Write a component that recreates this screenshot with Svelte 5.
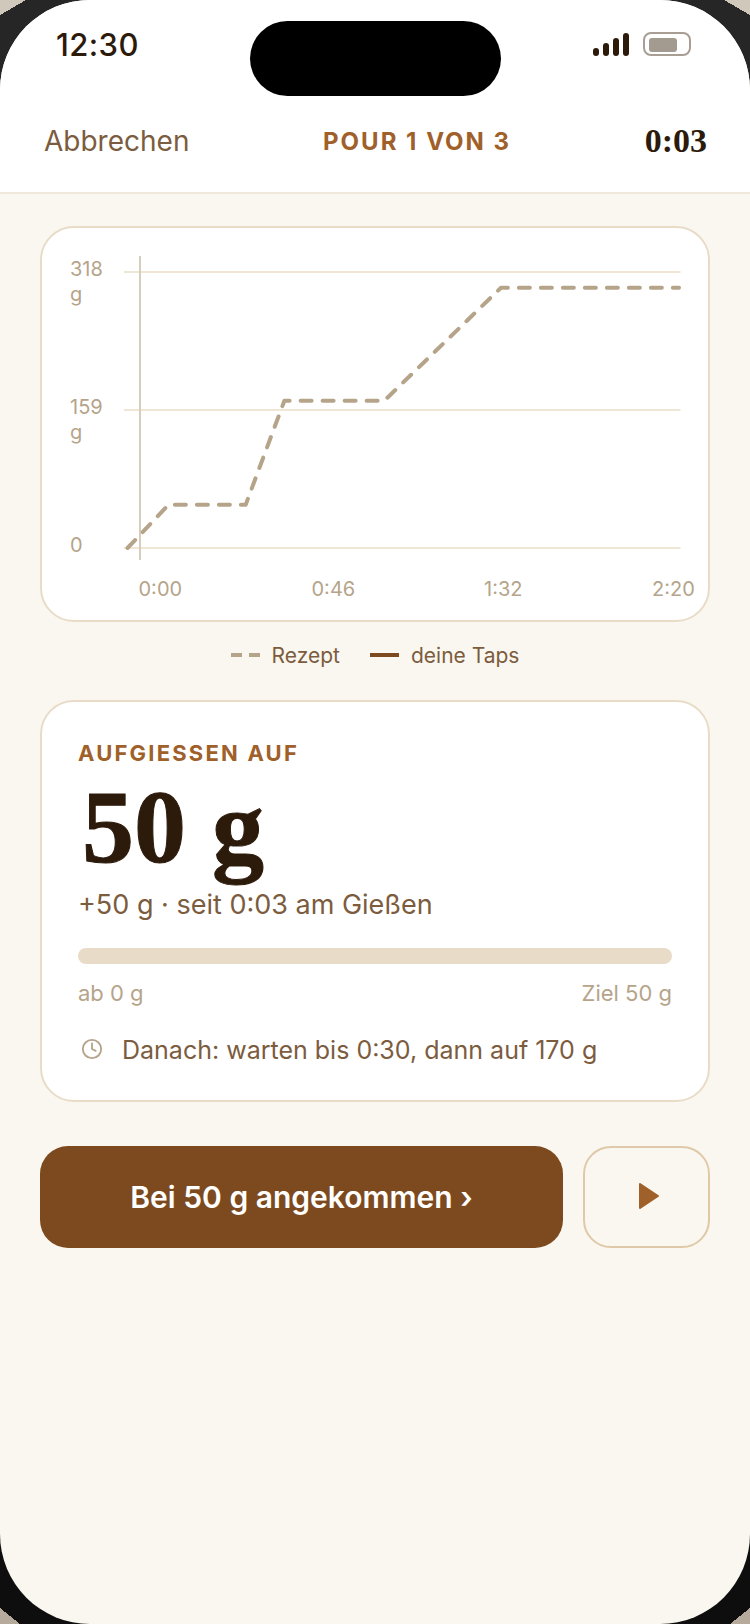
<script>
  const yLabels = [
    { y: 276, lines: ['318', 'g'] },
    { y: 414, lines: ['159', 'g'] },
    { y: 552, lines: ['0'] }
  ]
  const grid = [272, 410, 548]
  const xLabels = [
    { x: 138.5, text: '0:00' },
    { x: 311.5, text: '0:46' },
    { x: 484, text: '1:32' },
    { x: 652, text: '2:20' }
  ]
  const recipe = '127.5,548 168.5,504.7 245.7,504.7 284.4,400.7 384.3,400.7 501,287.7 679,287.7'
  const bars = [8, 13, 18, 23]
</script>

<div class="device">
  <div class="screen">
    <div class="top">
      <div class="status">
        <span class="clock">12:30</span>
        <div class="island"></div>
        <div class="status-icons">
          <div class="signal">
            {#each bars as h}
              <i style="height: {h}px"></i>
            {/each}
          </div>
          <div class="battery"><i></i></div>
        </div>
      </div>
      <header>
        <span class="cancel">Abbrechen</span>
        <span class="step">POUR 1 VON 3</span>
        <span class="elapsed">0:03</span>
      </header>
    </div>

    <main>
      <section class="card chart-card">
        <svg class="chart" viewBox="40 226 670 396" width="670" height="396">
          {#each grid as y}
            <line class="grid" x1="124" x2="680.5" y1={y} y2={y} />
          {/each}
          <line class="axis" x1="140" x2="140" y1="256" y2="560" />
          <polyline class="recipe" points={recipe} />
          {#each yLabels as label}
            <text class="tick" y={label.y}>
              {#each label.lines as line, i}
                <tspan x="70" dy={i ? 25 : 0}>{line}</tspan>
              {/each}
            </text>
          {/each}
          {#each xLabels as label}
            <text class="tick" x={label.x} y="596">{label.text}</text>
          {/each}
        </svg>
      </section>

      <div class="legend">
        <span class="key"><i class="dashes"><b></b><b></b></i>Rezept</span>
        <span class="key"><i class="solid"></i>deine Taps</span>
      </div>

      <section class="card target">
        <div class="eyebrow">AUFGIESSEN AUF</div>
        <div class="amount">50 g</div>
        <div class="since">+50 g · seit 0:03 am Gießen</div>
        <div class="track"></div>
        <div class="range"><span>ab 0 g</span><span>Ziel 50 g</span></div>
        <div class="next">
          <svg viewBox="0 0 24 24" width="22" height="22" fill="none" stroke="currentColor" stroke-width="2" stroke-linecap="round" stroke-linejoin="round">
            <circle cx="12" cy="12" r="10" />
            <polyline points="12 6 12 12 16 14" />
          </svg>
          <span>Danach: warten bis 0:30, dann auf 170 g</span>
        </div>
      </section>

      <div class="actions">
        <button class="primary">Bei 50 g angekommen ›</button>
        <button class="play" aria-label="Abspielen">
          <svg viewBox="0 0 22 28" width="22" height="28">
            <path d="M2 2 L20 14 L2 26 Z" fill="#a0602a" stroke="#a0602a" stroke-width="2" stroke-linejoin="round" />
          </svg>
        </button>
      </div>
    </main>
  </div>
</div>

<style>
  :global(body) {
    margin: 0;
    font-family: Inter, "Liberation Sans", sans-serif;
  }

  .device {
    width: 750px;
    height: 1624px;
    overflow: hidden;
    background:
      linear-gradient(to bottom right, #cfc8bb 50%, transparent 50%) 0 0 / 26px 15px no-repeat,
      linear-gradient(to bottom left, #cfc8bb 50%, transparent 50%) 100% 0 / 26px 15px no-repeat,
      linear-gradient(to top right, #b5aa9b 50%, transparent 50%) 0 100% / 20px 16px no-repeat,
      linear-gradient(to top left, #b5aa9b 50%, transparent 50%) 100% 100% / 20px 16px no-repeat,
      linear-gradient(180deg, #262626 0, #262626 120px, #0e0e0e 1500px);
  }

  .screen {
    width: 750px;
    height: 1624px;
    border-radius: 90px;
    overflow: hidden;
    background: #faf7f0;
    color: #2c1a0a;
  }

  .top {
    background: #fff;
    border-bottom: 2px solid #f0e8dc;
  }

  .status {
    position: relative;
    height: 96px;
    display: flex;
    justify-content: space-between;
    align-items: flex-start;
    padding: 0 59px 0 56px;
    box-sizing: border-box;
  }

  .clock {
    font-size: 31px;
    font-weight: 500;
    letter-spacing: 0.4px;
    line-height: 36px;
    margin-top: 27px;
  }

  .island {
    position: absolute;
    left: 250px;
    top: 21px;
    width: 251px;
    height: 75px;
    border-radius: 38px;
    background: #000;
  }

  .status-icons {
    display: flex;
    align-items: center;
    gap: 14px;
    margin-top: 32px;
  }

  .signal {
    display: flex;
    align-items: flex-end;
    gap: 4px;
    height: 24px;
  }

  .signal i {
    display: block;
    width: 6px;
    border-radius: 3px;
    background: #2c1a0a;
  }

  .battery {
    width: 48px;
    height: 24px;
    box-sizing: border-box;
    padding: 4px;
    border: 2px solid #a89e94;
    border-radius: 8px;
  }

  .battery i {
    display: block;
    width: 28px;
    height: 14px;
    border-radius: 3px;
    background: #a39a90;
  }

  header {
    height: 96px;
    display: flex;
    justify-content: space-between;
    align-items: center;
    padding: 0 43px 6px 44px;
    box-sizing: border-box;
  }

  .cancel {
    font-size: 28px;
    color: #7c5c3e;
  }

  .step {
    font-size: 24px;
    font-weight: 700;
    letter-spacing: 2px;
    color: #a0602a;
  }

  .elapsed {
    font-family: "Liberation Serif", serif;
    font-size: 34px;
    font-weight: 700;
  }

  main {
    padding: 32px 40px 0;
  }

  .card {
    background: #fff;
    border: 2px solid #e8dcc8;
    border-radius: 34px;
    box-sizing: border-box;
  }

  .chart-card {
    height: 396px;
    overflow: hidden;
  }

  .chart {
    display: block;
    margin: -2px;
  }

  .grid {
    stroke: #f0e6d6;
    stroke-width: 2;
  }

  .axis {
    stroke: #d8ccbb;
    stroke-width: 2;
  }

  .recipe {
    fill: none;
    stroke: #b5a48a;
    stroke-width: 4;
    stroke-linecap: round;
    stroke-linejoin: round;
    stroke-dasharray: 11 11;
  }

  .tick {
    font-size: 20px;
    fill: #b5a48a;
  }

  .legend {
    height: 66px;
    display: flex;
    justify-content: center;
    align-items: center;
    gap: 30px;
    font-size: 21px;
    color: #7c5c3e;
    margin-bottom: 12px;
  }

  .key {
    display: flex;
    align-items: center;
    gap: 12px;
  }

  .dashes {
    display: flex;
    gap: 7px;
  }

  .dashes b {
    width: 11px;
    height: 4px;
    background: #b5a48a;
  }

  .solid {
    width: 29px;
    height: 4px;
    background: #7c4a1e;
  }

  .target {
    height: 402px;
    padding: 39px 36px 0;
  }

  .eyebrow {
    font-size: 22px;
    font-weight: 700;
    letter-spacing: 2.2px;
    line-height: 24px;
    color: #a0602a;
  }

  .amount {
    font-family: "Liberation Serif", serif;
    font-size: 104px;
    font-weight: 700;
    line-height: 112px;
    margin: 6px 0 0 4px;
    -webkit-text-stroke: 1px #2c1a0a;
  }

  .since {
    font-size: 27px;
    line-height: 32px;
    color: #7c5c3e;
    margin-top: 6px;
  }

  .track {
    height: 16px;
    border-radius: 8px;
    background: #e8dcc8;
    margin-top: 27px;
  }

  .range {
    display: flex;
    justify-content: space-between;
    font-size: 22px;
    line-height: 26px;
    color: #b5a48a;
    margin-top: 16px;
  }

  .next {
    display: flex;
    align-items: center;
    gap: 19px;
    font-size: 25px;
    line-height: 32px;
    color: #7c5c3e;
    margin: 28px 0 0 3px;
  }

  .next svg {
    color: #b5a48a;
    margin-top: -3px;
  }

  .actions {
    display: flex;
    gap: 20px;
    margin-top: 44px;
  }

  button {
    font-family: inherit;
    height: 102px;
    box-sizing: border-box;
    border-radius: 28px;
  }

  .primary {
    flex: 1;
    border: 0;
    background: #7c4a1e;
    color: #fff;
    font-size: 30px;
    font-weight: 600;
    padding-bottom: 2px;
  }

  .play {
    width: 127px;
    background: transparent;
    border: 2px solid #dfc9a8;
    display: flex;
    align-items: center;
    justify-content: center;
    padding: 0 0 0 4px;
  }

  .play svg {
    margin-top: -2px;
  }
</style>
